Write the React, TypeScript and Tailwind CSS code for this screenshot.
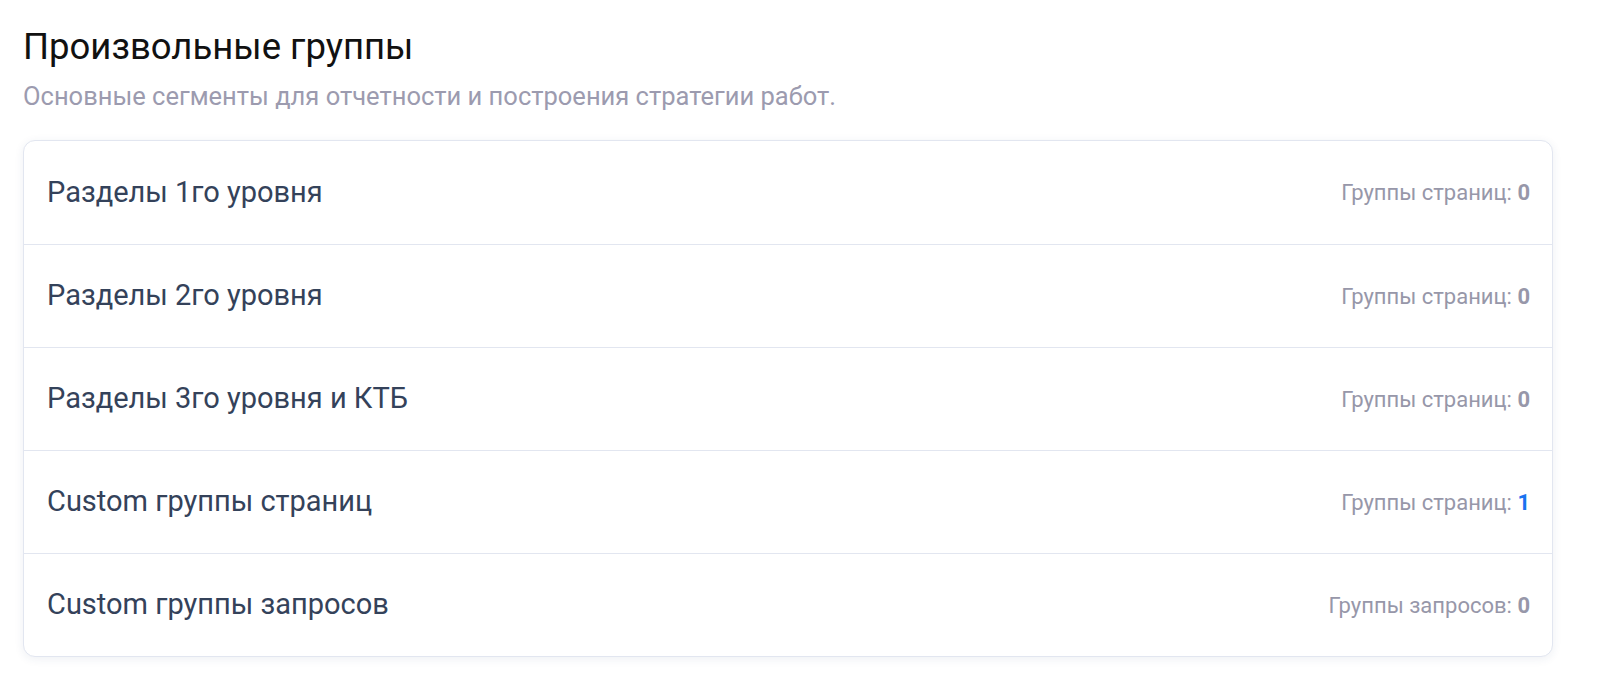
import React from 'react';

type Row = { title: string; label: string; count: number };

const rows: Row[] = [
  { title: 'Разделы 1го уровня', label: 'Группы страниц', count: 0 },
  { title: 'Разделы 2го уровня', label: 'Группы страниц', count: 0 },
  { title: 'Разделы 3го уровня и КТБ', label: 'Группы страниц', count: 0 },
  { title: 'Custom группы страниц', label: 'Группы страниц', count: 1 },
  { title: 'Custom группы запросов', label: 'Группы запросов', count: 0 },
];

export default function App() {
  return (
    <div className="min-h-screen bg-white px-[23px] pt-[25px] font-['Roboto',sans-serif]">
      <h1 className="text-[36.5px] leading-[44px] font-normal text-[#111111]">Произвольные группы</h1>
      <p className="mt-[11px] text-[25.5px] leading-[32px] text-[#9c9baf]">
        Основные сегменты для отчетности и построения стратегии работ.
      </p>

      <div className="mt-[28px] w-[1530px] rounded-[12px] border border-[#e2e6f0] bg-white shadow-[0_2px_10px_rgba(40,60,110,0.08)]">
        {rows.map((row, i) => (
          <div
            key={row.title}
            className={`flex h-[103px] items-center justify-between pl-[23px] pr-[22px] ${i > 0 ? 'border-t border-[#e2e6f0]' : ''}`}
          >
            <span className="text-[29px] text-[#34425a]">{row.title}</span>
            <span className="text-[22px] text-[#9797a9]">
              {row.label}:{' '}
              <span className={`font-bold ${row.count > 0 ? 'text-[#1a73f0]' : 'text-[#9797a9]'}`}>{row.count}</span>
            </span>
          </div>
        ))}
      </div>
    </div>
  );
}
